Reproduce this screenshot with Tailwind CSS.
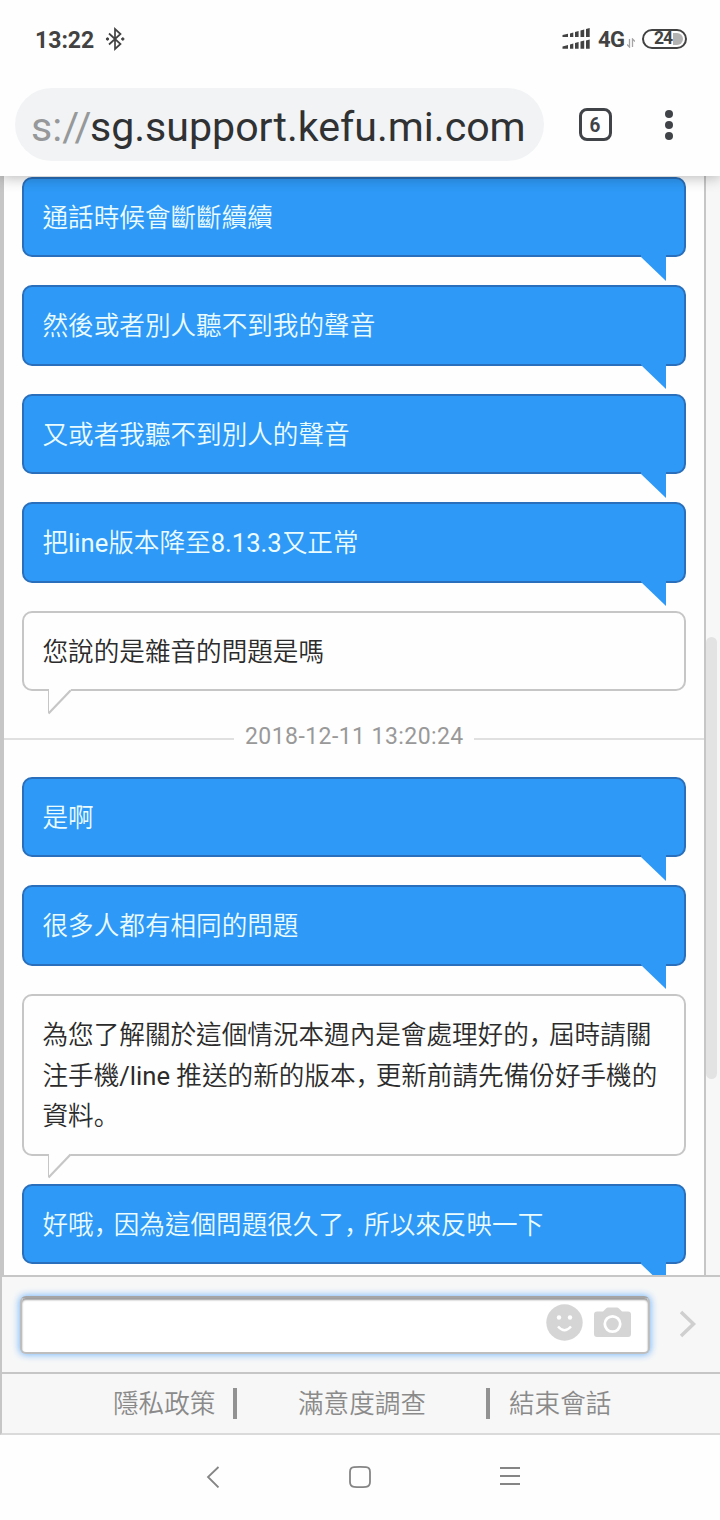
<!DOCTYPE html>
<html lang="zh-Hant">
<head>
<meta charset="utf-8">
<title>Support chat</title>
<script src="https://cdn.jsdelivr.net/npm/@tailwindcss/browser@4"></script>
</head>
<body class="w-[720px] h-[1520px] overflow-hidden bg-[#fefefe] flex flex-col font-['Roboto','Noto_Sans_CJK_SC',sans-serif]">
<!-- Status bar -->
<header class="h-[78px] shrink-0 flex items-center pl-[35px] pr-[33px] text-[#424242]">
  <span class="text-[23px] font-bold w-[70px] leading-none pt-0.5">13:22</span>
  <svg class="w-5 h-6" viewBox="0 0 20 24" fill="none" stroke="#424242" stroke-width="1.7"><path d="M4 6.500 15.500 17 10 22V2l5.500 5L4 17.500"/><circle cx="2.500" cy="12" r="1.200" fill="#424242" stroke-width="1"/><circle cx="17.800" cy="12" r="1.200" fill="#424242" stroke-width="1"/></svg>
  <svg class="ml-auto w-7 h-[22px]" viewBox="0 0 28 22" fill="#424242"><path d="M.5 7 6 5.800V9H.5zM8 5.500l3.300-1V9H8zM13 4l3.600-1V9H13zM18.500 2.500l3.700-1V9h-3.700zM24 1l3.700-1v9H24zM.5 18.500 6 17v3.700H.5zM8 16.500l3.300-1v5.200H8zM13 15l3.600-1v6.700H13zM18.500 13.500l3.700-1v8.200h-3.700zM24 12.500l3.700-1v9.200H24z"/></svg>
  <span class="ml-2 text-[22px] font-bold leading-none w-[27px] pt-px tracking-[-0.5px]">4G</span>
  <svg class="ml-[2px] mt-2 w-2 h-2.5" viewBox="0 0 8 10" fill="none" stroke="#a5a5a5" stroke-width="1.300"><path d="M2.500 1v8L0 6.500M5.500 9V1L8 3.500"/></svg>
  <span class="ml-[7px] w-[45px] h-5 rounded-full border-2 border-[#424242] flex items-center justify-end pr-[2px]">
    <span class="text-[17.500px] font-bold leading-none tracking-[-1px]">24</span><span class="w-[10px] h-3 ml-px rounded-r-full bg-[#b3b3b3]"></span>
  </span>
</header>
<!-- Browser toolbar -->
<div class="relative z-10 h-[98px] shrink-0 bg-[#fefefe] shadow-[0_1px_14px_rgba(0,0,0,0.3)] [clip-path:inset(0_0_-16px_0)] flex pt-[10px]">
  <div class="ml-[15px] w-[529px] h-[73px] rounded-full bg-[#f1f3f5] pl-4 pt-[6px] flex items-center text-[41.100px] whitespace-nowrap text-[#303133]"><span class="text-[#969899] w-[59px]">s://</span><span>sg.support.kefu.mi.com</span></div>
  <div class="ml-[35px] mt-5 w-[33px] h-[33px] rounded-[8px] border-[3.500px] border-[#404347] flex items-center justify-center text-[21px] font-bold leading-none text-[#404347]"><span class="scale-x-90 pt-px">6</span></div>
  <div class="ml-[53px] mt-[22px] flex flex-col gap-[3.500px]">
    <i class="size-[7.500px] rounded-full bg-[#404347]"></i><i class="size-[7.500px] rounded-full bg-[#404347]"></i><i class="size-[7.500px] rounded-full bg-[#404347]"></i>
  </div>
</div>
<!-- Conversation -->
<main class="h-[1099px] shrink-0 flex overflow-hidden bg-[#f7f7f7]">
  <div class="w-[706px] border-l-4 border-r-2 border-[#c6c6c6] bg-[#fefefe] pt-[0.700px] text-[25.600px] font-[350] leading-[40.500px] text-[#2b2b2b]">
    <div class="mx-[18px] flex flex-col gap-7">
      <div class="relative h-[80.500px] rounded-[10px] border-2 border-[#2a6fbb] bg-[#2e99f6] px-[18.500px] pt-[19.300px] text-[#eafcff]">通話時候會斷斷續續<svg class="absolute right-[18px] top-[76px] w-[25px] h-[27px]" viewBox="0 0 25 27"><path d="M0 0H25V26L0 2z" fill="#2e99f6"/></svg></div>
      <div class="relative h-[80.500px] rounded-[10px] border-2 border-[#2a6fbb] bg-[#2e99f6] px-[18.500px] pt-[19.300px] text-[#eafcff]">然後或者別人聽不到我的聲音<svg class="absolute right-[18px] top-[76px] w-[25px] h-[27px]" viewBox="0 0 25 27"><path d="M0 0H25V26L0 2z" fill="#2e99f6"/></svg></div>
      <div class="relative h-[80.500px] rounded-[10px] border-2 border-[#2a6fbb] bg-[#2e99f6] px-[18.500px] pt-[19.300px] text-[#eafcff]">又或者我聽不到別人的聲音<svg class="absolute right-[18px] top-[76px] w-[25px] h-[27px]" viewBox="0 0 25 27"><path d="M0 0H25V26L0 2z" fill="#2e99f6"/></svg></div>
      <div class="relative h-[80.500px] rounded-[10px] border-2 border-[#2a6fbb] bg-[#2e99f6] px-[18.500px] pt-[19.300px] text-[#eafcff]">把<span class="font-normal">line</span>版本降至<span class="font-normal">8.13.3</span>又正常<svg class="absolute right-[18px] top-[76px] w-[25px] h-[27px]" viewBox="0 0 25 27"><path d="M0 0H25V26L0 2z" fill="#2e99f6"/></svg></div>
      <div class="relative h-[80.500px] rounded-[10px] border-2 border-[#c6c6c6] bg-[#fefefe] px-[18.500px] pt-[19.300px]">您說的是雜音的問題是嗎<svg class="absolute left-6 top-[76px] w-6 h-[27px]" viewBox="0 0 24 27"><path d="M1 0H23L22 2 1 23z" fill="#fefefe"/><path d="M.5 1.500V24" stroke="#c6c6c6"/><path d="M.500 24.500 22.500 1.500" stroke="#c6c6c6" stroke-width="2.200"/></svg></div>
    </div>
    <div class="h-[85.500px] flex items-center justify-center gap-[11px] pt-[3px] text-[23px] font-normal leading-none text-[#999]">
      <i class="h-[2px] w-[230px] bg-[#e0e0e0] mt-[7px]"></i><span class="whitespace-nowrap w-[218px] text-center tracking-[0.430px] pt-[1.500px]">2018-12-11 13:20:24</span><i class="h-[2px] w-[230px] bg-[#e0e0e0] mt-[7px]"></i>
    </div>
    <div class="mx-[18px] flex flex-col gap-7">
      <div class="relative h-[80.500px] rounded-[10px] border-2 border-[#2a6fbb] bg-[#2e99f6] px-[18.500px] pt-[19.300px] text-[#eafcff]">是啊<svg class="absolute right-[18px] top-[76px] w-[25px] h-[27px]" viewBox="0 0 25 27"><path d="M0 0H25V26L0 2z" fill="#2e99f6"/></svg></div>
      <div class="relative h-[80.500px] rounded-[10px] border-2 border-[#2a6fbb] bg-[#2e99f6] px-[18.500px] pt-[19.300px] text-[#eafcff]">很多人都有相同的問題<svg class="absolute right-[18px] top-[76px] w-[25px] h-[27px]" viewBox="0 0 25 27"><path d="M0 0H25V26L0 2z" fill="#2e99f6"/></svg></div>
      <div class="relative h-[162px] rounded-[10px] border-2 border-[#c6c6c6] bg-[#fefefe] px-[18.500px] pt-[19.500px] whitespace-nowrap">為您了解關於這個情況本週內是會處理好的<span lang="zh-Hans" class="tracking-[-5.400px]">，</span>屆時請關<br>注手機<span class="font-normal">/line </span>推送的新的版本<span lang="zh-Hans" class="tracking-[-5.400px]">，</span>更新前請先備份好手機的<br>資料<span lang="zh-Hans">。</span><svg class="absolute left-6 top-[157.500px] w-6 h-[27px]" viewBox="0 0 24 27"><path d="M1 0H23L22 2 1 23z" fill="#fefefe"/><path d="M.5 1.500V24" stroke="#c6c6c6"/><path d="M.500 24.500 22.500 1.500" stroke="#c6c6c6" stroke-width="2.200"/></svg></div>
      <div class="relative h-[80.500px] rounded-[10px] border-2 border-[#2a6fbb] bg-[#2e99f6] px-[18.500px] pt-[19.300px] text-[#eafcff]">好哦<span lang="zh-Hans" class="tracking-[-5.600px]">，</span>因為這個問題很久了<span lang="zh-Hans" class="tracking-[-5.600px]">，</span>所以來反映一下<svg class="absolute right-[18px] top-[76px] w-[25px] h-[27px]" viewBox="0 0 25 27"><path d="M0 0H25V26L0 2z" fill="#2e99f6"/></svg></div>
    </div>
  </div>
  <div class="mt-[461px] w-[11px] h-[442px] rounded-full bg-[#e3e3e3]"></div>
</main>
<!-- Composer -->
<section class="h-[97px] shrink-0 border-t-2 border-l-2 border-[#c6c6c6] bg-[#f7f7f7] flex pt-[19px] pl-[18px]">
  <div class="w-[630px] h-[58px] rounded-[6px] border-2 border-[#bebebe] border-t-[#a5a5a5] bg-white shadow-[0_0_7px_1px_#7dbbfa,inset_0_2px_2px_rgba(0,0,0,0.4)] flex items-center justify-end gap-[11px] pr-[17px] pb-1.5">
    <svg class="size-[37px]" viewBox="0 0 37 37"><circle cx="18.500" cy="18.500" r="18.200" fill="#d5d5d5"/><circle cx="13" cy="13.500" r="2.200" fill="#fff"/><circle cx="24" cy="13.500" r="2.200" fill="#fff"/><path d="M12 22.500Q18.500 30 25 22.500" fill="none" stroke="#fff" stroke-width="2.400"/></svg>
    <svg class="w-[37px] h-[30px]" viewBox="0 0 37 30"><path d="M3 4.500H9L12 1.500Q13 .5 14 .5H23Q24 .5 25 1.500L28 4.500H34Q37 4.500 37 7.500V27Q37 30 34 30H3Q0 30 0 27V7.500Q0 4.500 3 4.500z" fill="#d5d5d5"/><circle cx="18.500" cy="17" r="7.700" fill="none" stroke="#fff" stroke-width="2.800"/></svg>
  </div>
  <svg class="ml-[29px] mt-[14px] w-[18px] h-[28px]" viewBox="0 0 18 28" fill="none" stroke="#cfcfcf" stroke-width="3.500"><path d="M2 2 14.500 14 2 26"/></svg>
</section>
<!-- Footer links -->
<nav class="h-[63px] shrink-0 border-l-2 border-y-2 border-[#c6c6c6] border-b-[#dadada] bg-[#f7f7f7] flex items-center text-[25.600px] font-[350] leading-none text-[#8a8a8a] whitespace-nowrap">
  <span class="ml-[111px] w-[103px] pt-[3px]">隱私政策</span><i class="ml-[17px] w-1 h-[31px] bg-[#929292]"></i>
  <span class="ml-[61px] w-[128px] pt-[3px]">滿意度調查</span><i class="ml-[60px] w-1 h-[31px] bg-[#929292]"></i>
  <span class="ml-[19px] pt-[3px]">結束會話</span>
</nav>
<!-- System navigation -->
<div class="flex-1 flex items-start pt-[30px] pl-[206px]">
  <svg class="w-[14px] h-[22px] mt-px" viewBox="0 0 14 22" fill="none" stroke="#858585" stroke-width="1.800"><path d="M12.500 1 2 11 12.500 21.500"/></svg>
  <svg class="ml-[129px] w-[22px] h-[22px] mt-px" viewBox="0 0 22 22" fill="none" stroke="#858585" stroke-width="1.800"><path d="M1 6Q1 1.500 5 1.200 11 .7 17 1.200 21 1.500 21 6V16Q21 20.500 17 20.800 11 21.300 5 20.800 1 20.500 1 16z"/></svg>
  <svg class="ml-[129px] w-5 h-[22px]" viewBox="0 0 20 22" stroke="#858585" stroke-width="1.800"><path d="M0 3H20M0 11H20M0 19H20"/></svg>
</div>
</body>
</html>
